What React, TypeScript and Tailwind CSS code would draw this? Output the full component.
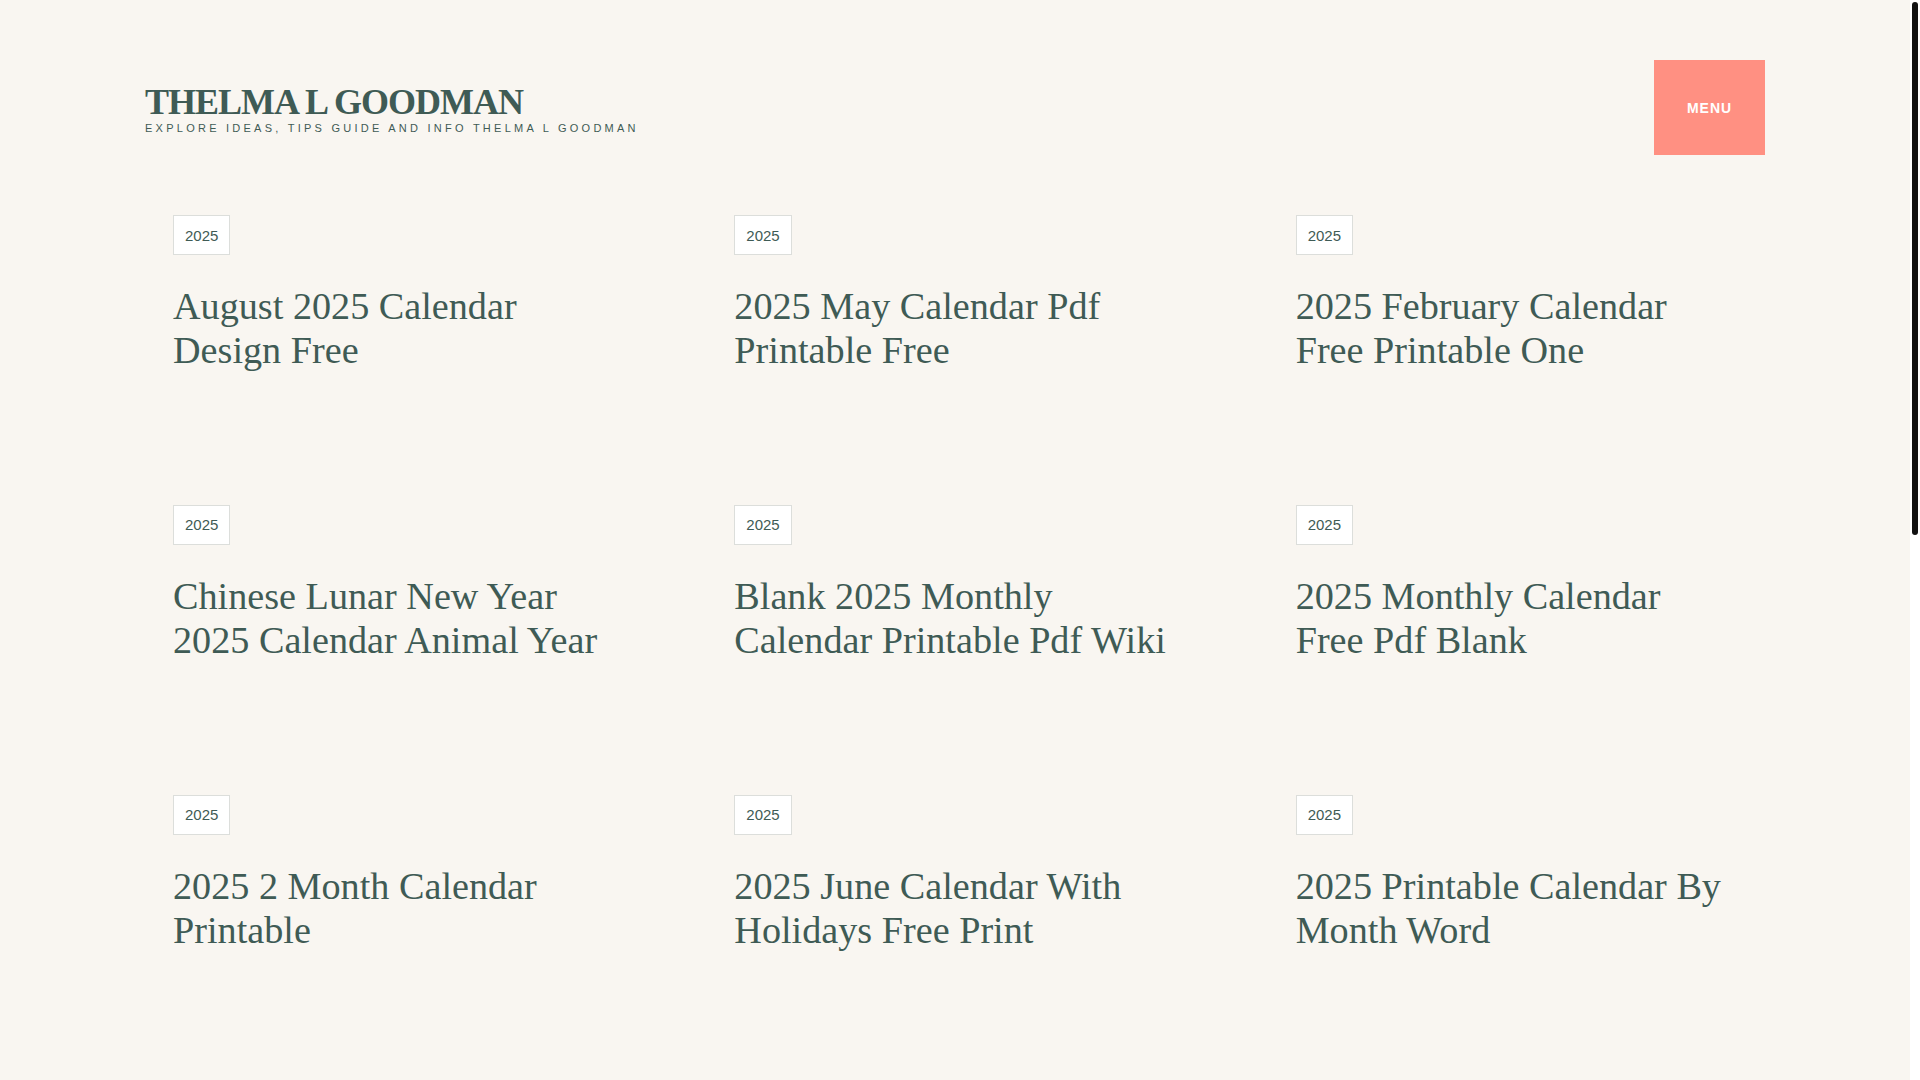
const posts = [
  'August 2025 Calendar Design Free',
  '2025 May Calendar Pdf Printable Free',
  '2025 February Calendar Free Printable One',
  'Chinese Lunar New Year 2025 Calendar Animal Year',
  'Blank 2025 Monthly Calendar Printable Pdf Wiki',
  '2025 Monthly Calendar Free Pdf Blank',
  '2025 2 Month Calendar Printable',
  '2025 June Calendar With Holidays Free Print',
  '2025 Printable Calendar By Month Word',
];

export default function App() {
  return (
    <div className="h-screen flex overflow-hidden bg-[#f9f6f1] text-[#3f5b55]">
      <main className="flex-1 min-w-0 px-[145px]">
        {/* header */}
        <header className="flex items-center justify-between pt-[60px]">
          <div className="pt-[4px]">
            <h1
              className="text-[36px] font-bold leading-none tracking-[-1px]"
              style={{ fontFamily: "'Liberation Serif', 'Times New Roman', serif" }}
            >
              THELMA L GOODMAN
            </h1>
            <p
              className="text-[11px] leading-[16px] uppercase tracking-[3.25px]"
              style={{ fontFamily: "'Liberation Sans', Arial, sans-serif" }}
            >
              Explore Ideas, Tips Guide and Info Thelma L Goodman
            </p>
          </div>
          <button
            className="w-[111px] h-[95px] pt-[2px] bg-[#ff9082] text-white text-[14px] font-bold tracking-[1px] flex items-center justify-center"
            style={{ fontFamily: "'Liberation Sans', Arial, sans-serif" }}
          >
            MENU
          </button>
        </header>

        {/* posts */}
        <div className="grid grid-cols-3 gap-x-[64px] gap-y-[132px] mt-[60px]">
          {posts.map((title, i) => (
            <article key={i} className="pl-[28px]">
              <span
                className="inline-flex items-center h-[40px] px-[11px] bg-white border border-[#dcdedb] text-[15px] leading-none"
                style={{ fontFamily: "'Liberation Sans', Arial, sans-serif" }}
              >
                2025
              </span>
              <h2
                className="mt-[30px] max-w-[436px] text-[38.2px] leading-[1.15]"
                style={{ fontFamily: "'Liberation Serif', 'Times New Roman', serif" }}
              >
                {title}
              </h2>
            </article>
          ))}
        </div>
      </main>

      {/* scrollbar */}
      <div className="w-[10px] shrink-0 bg-white px-[2px] pt-[2px]">
        <div className="h-[533px] rounded-full bg-[#111111]" />
      </div>
    </div>
  );
}
